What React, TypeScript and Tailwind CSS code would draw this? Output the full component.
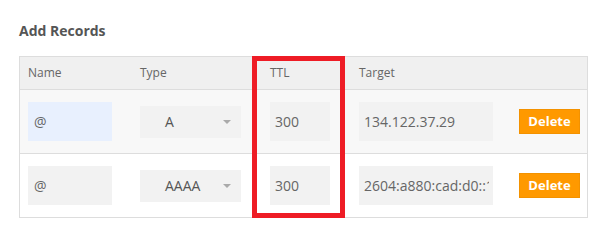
const records = [
  { name: "@", type: "A", ttl: "300", target: "134.122.37.29", focused: true, bg: "bg-[#f8f8f8]" },
  { name: "@", type: "AAAA", ttl: "300", target: "2604:a880:cad:d0::1", focused: false, bg: "bg-white" },
];

const cols = "grid grid-cols-[112px_130px_89px_160px_1fr] items-center pl-2 pr-[7px]";

export default function App() {
  return (
    <div className="h-[246px] w-[610px] bg-white pl-[19px] pt-[22px] font-['Open_Sans',sans-serif] text-[#666]">
      <h2 className="text-[14px] font-bold leading-[18px] text-[#555]">Add Records</h2>

      <div className="relative mt-4 w-[569px] border border-[#dddddd]">
        <div className={`${cols} h-[33px] border-b border-[#dddddd] bg-[#f0f0f0] text-[12px]`}>
          <span>Name</span>
          <span>Type</span>
          <span>TTL</span>
          <span>Target</span>
          <span />
        </div>

        {records.map((r, i) => (
          <div
            key={i}
            className={`${cols} py-3 ${r.bg} ${i === 0 ? "border-b border-[#dddddd]" : ""}`}
          >
            <input
              readOnly
              value={r.name}
              className={`h-[39px] w-[84px] pl-[6px] text-[14px] text-[#666] outline-none ${
                r.focused ? "bg-[#e8f0fe]" : "bg-[#f2f2f2]"
              }`}
            />
            <div className="flex h-8 w-[101px] items-center justify-between bg-[#f2f2f2] pl-[25px] pr-[10px] text-[14px] text-[#555]">
              <span>{r.type}</span>
              <span className="h-0 w-0 border-x-[4px] border-t-[4px] border-x-transparent border-t-[#aaaaaa]" />
            </div>
            <input
              readOnly
              value={r.ttl}
              className="h-[39px] w-[60px] bg-[#f2f2f2] pl-[5px] text-[14px] text-[#666] outline-none"
            />
            <input
              readOnly
              value={r.target}
              className="h-[39px] w-[134px] bg-[#f2f2f2] pl-[5px] pr-1 text-[14px] text-[#666] outline-none"
            />
            <button className="h-[25px] w-[61px] border border-[#f39200] bg-[#ff9900] text-[13px] font-bold text-white">
              Delete
            </button>
          </div>
        ))}

        <div className="pointer-events-none absolute left-[232px] top-[-1px] h-[162px] w-[93px] border-[5px] border-[#ee1c25]" />
      </div>
    </div>
  );
}
